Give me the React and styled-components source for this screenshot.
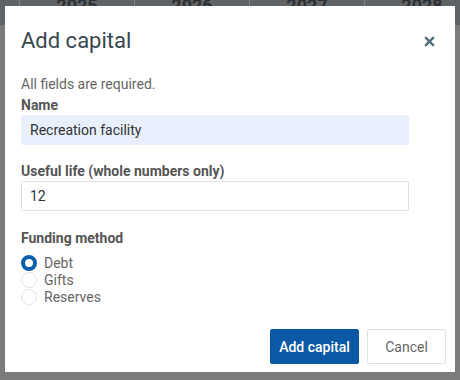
import styled, { createGlobalStyle } from 'styled-components';

const GlobalStyle = createGlobalStyle`
  html, body {
    margin: 0;
    padding: 0;
    width: 460px;
    height: 380px;
    overflow: hidden;
    font-family: Roboto, 'Liberation Sans', Arial, sans-serif;
  }
`;

const Page = styled.div`
  position: relative;
  width: 460px;
  height: 380px;
  background: #7b7b7b;
`;

const YearRow = styled.div`
  display: grid;
  grid-template-columns: 20px repeat(4, 115px);
  height: 25px;
  background: #606366;
`;

const YearCell = styled.div`
  border-right: 1px solid #7d8083;
  box-sizing: border-box;
  color: #2c3033;
  font-size: 18px;
  font-weight: 700;
  line-height: 12px;
  text-align: center;
  overflow: hidden;
`;

const Modal = styled.div`
  position: absolute;
  left: 5px;
  top: 6px;
  width: 450px;
  height: 366px;
  background: #fff;
  display: flex;
  flex-direction: column;
  box-sizing: border-box;
`;

const Header = styled.div`
  display: flex;
  align-items: center;
  justify-content: space-between;
  padding: 20px 20px 0 16px;
`;

const Title = styled.h2`
  margin: 0;
  font-size: 22px;
  line-height: 30px;
  font-weight: 400;
  color: #37474f;
`;

const Close = styled.button`
  border: none;
  background: none;
  padding: 0;
  width: 12px;
  height: 12px;
  display: flex;
  align-items: center;
  justify-content: center;
  cursor: pointer;
`;

const Body = styled.div`
  padding: 19px 46px 0 16px;
  display: flex;
  flex-direction: column;
`;

const Note = styled.p`
  margin: 0;
  font-size: 14px;
  line-height: 18px;
  color: #666;
`;

const Label = styled.label`
  display: block;
  font-size: 14px;
  line-height: 18px;
  font-weight: 700;
  color: #555;
  margin-top: ${p => p.$gap}px;
  margin-bottom: 1px;
`;

const Input = styled.input`
  box-sizing: border-box;
  width: 388px;
  height: 30px;
  padding: 0 8px;
  font-family: inherit;
  font-size: 14px;
  color: #333;
  border: 1px solid ${p => (p.$filled ? '#e8f0fe' : '#e0e0e0')};
  background: ${p => (p.$filled ? '#e8f0fe' : '#fff')};
  border-radius: 2px;
  outline: none;
`;

const RadioGroup = styled.div`
  display: flex;
  flex-direction: column;
  margin-top: 6px;
`;

const RadioRow = styled.label`
  display: flex;
  align-items: center;
  gap: 7px;
  height: 17px;
  font-size: 14px;
  color: #666;
`;

const Circle = styled.span`
  box-sizing: border-box;
  width: 16px;
  height: 16px;
  border-radius: 50%;
  border: ${p => (p.$checked ? '4px solid #0b5fa8' : '1px solid #e4e4e4')};
  background: #fff;
`;

const Footer = styled.div`
  margin-top: auto;
  display: flex;
  justify-content: flex-end;
  gap: 8px;
  padding: 0 9px 8px 0;
`;

const Button = styled.button`
  box-sizing: border-box;
  height: 35px;
  width: ${p => (p.$primary ? 89 : 79)}px;
  padding: 0;
  font-family: inherit;
  font-size: 14px;
  font-weight: ${p => (p.$primary ? 500 : 400)};
  color: ${p => (p.$primary ? '#fff' : '#666')};
  background: ${p => (p.$primary ? '#0b59a5' : '#fff')};
  border: 1px solid ${p => (p.$primary ? '#0b59a5' : '#e2e2e2')};
  border-radius: 2px;
  cursor: pointer;
`;

const years = ['', '2025', '2026', '2027', '2028'];

export default function App() {
  return (
    <>
      <GlobalStyle />
      <Page>
        <YearRow>
          {years.map((y, i) => (
            <YearCell key={i}>{y}</YearCell>
          ))}
        </YearRow>
        <Modal>
          <Header>
            <Title>Add capital</Title>
            <Close aria-label="Close">
              <svg width="11" height="11" viewBox="0 0 12 12">
                <path d="M2 2 L10 10 M10 2 L2 10" stroke="#546e7a" strokeWidth="2.6" strokeLinecap="round" />
              </svg>
            </Close>
          </Header>
          <Body>
            <Note>All fields are required.</Note>
            <Label $gap={3}>Name</Label>
            <Input $filled defaultValue="Recreation facility" />
            <Label $gap={17}>Useful life (whole numbers only)</Label>
            <Input defaultValue="12" />
            <Label $gap={18}>Funding method</Label>
            <RadioGroup>
              {['Debt', 'Gifts', 'Reserves'].map((m, i) => (
                <RadioRow key={m}>
                  <Circle $checked={i === 0} />
                  {m}
                </RadioRow>
              ))}
            </RadioGroup>
          </Body>
          <Footer>
            <Button $primary>Add capital</Button>
            <Button>Cancel</Button>
          </Footer>
        </Modal>
      </Page>
    </>
  );
}
